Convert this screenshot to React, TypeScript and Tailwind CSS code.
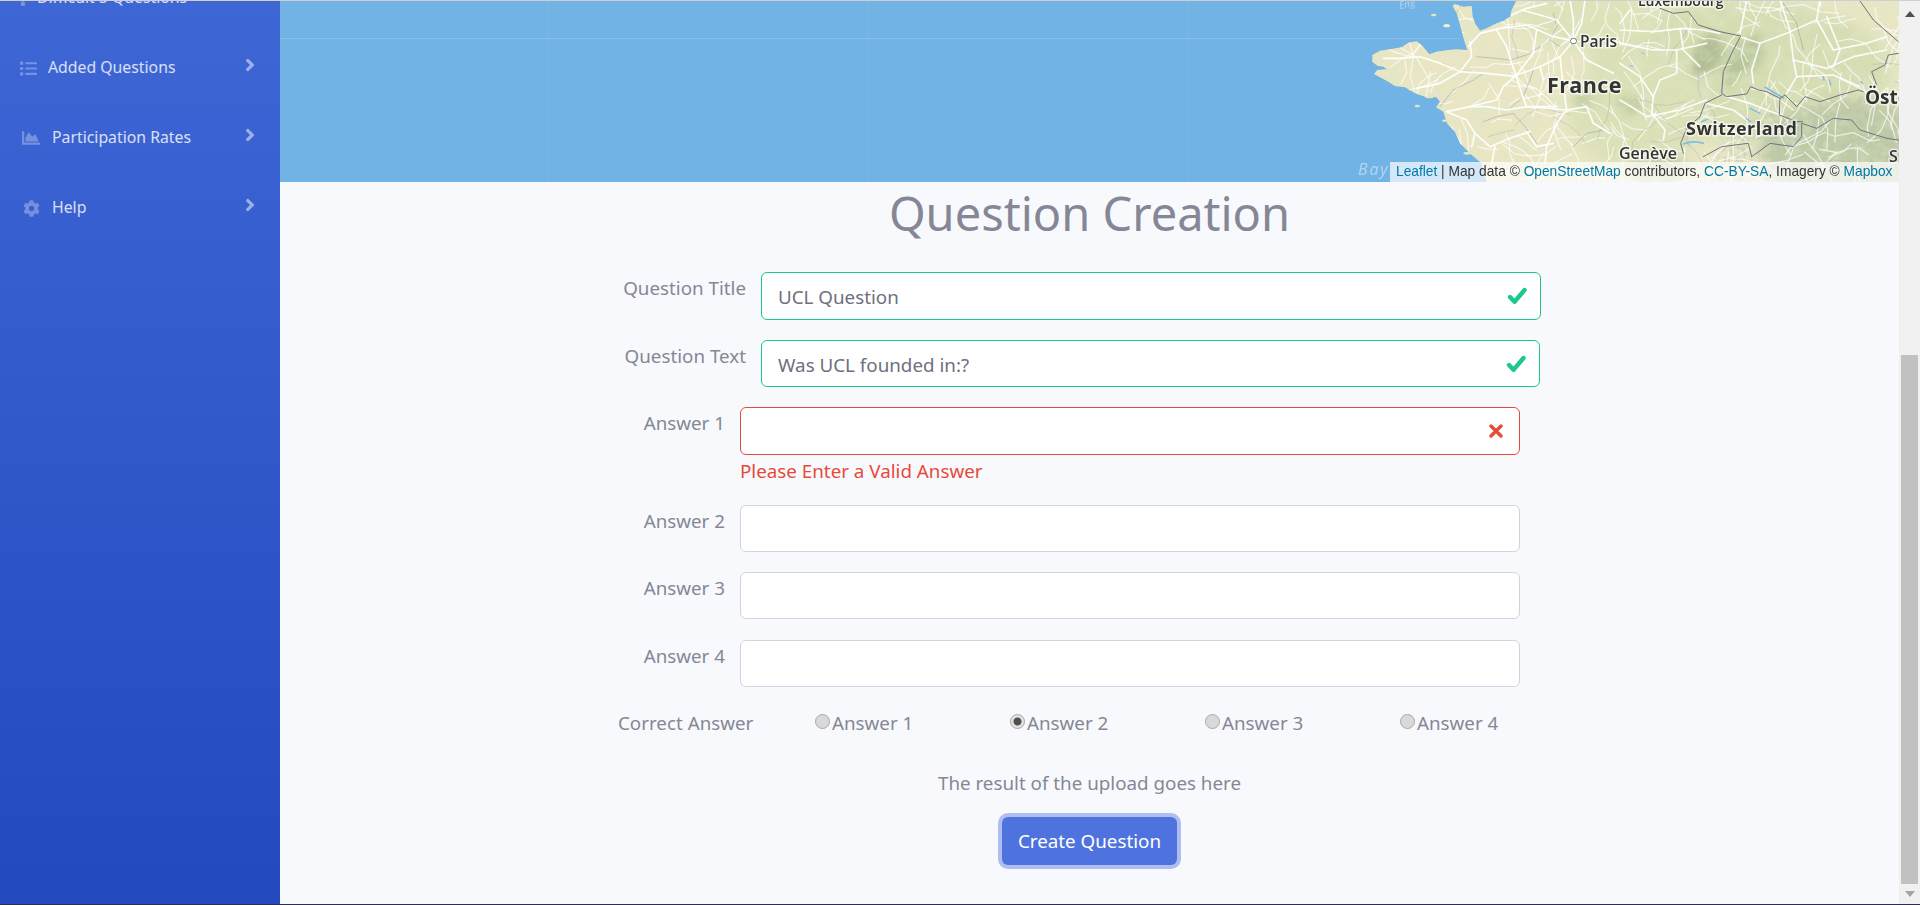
import React from "react";
import { FaExclamation, FaList, FaChartArea, FaCog, FaAngleRight } from "react-icons/fa";

const font = "font-['Noto_Sans',sans-serif]";

function NavItem({ icon, label, iconBox, textCls }: { icon: React.ReactNode; label: string; iconBox: string; textCls: string }) {
  return (
    <div className="flex items-center h-[70px] pr-[20px]">
      <span className={`flex shrink-0 items-center justify-center text-white/30 ${iconBox}`}>{icon}</span>
      <span className={`text-[15.8px] text-white/80 ${textCls}`}>{label}</span>
      <FaAngleRight className="ml-auto -mt-[6px] text-white/50" size={20} />
    </div>
  );
}

function Sidebar() {
  return (
    <aside className="w-[280px] shrink-0 overflow-hidden bg-gradient-to-b from-[#3f66d5] to-[#224abe]">
      <div className="-mt-[38px]">
        <NavItem icon={<FaExclamation size={15} />} iconBox="ml-[16px] w-[14px]" textCls="ml-[7px]" label="Difficult 5 Questions" />
        <NavItem icon={<FaList size={17} />} iconBox="ml-[20px] w-[17px]" textCls="ml-[11px]" label="Added Questions" />
        <NavItem icon={<FaChartArea size={18} />} iconBox="ml-[22px] w-[18px]" textCls="ml-[12px]" label="Participation Rates" />
        <NavItem icon={<FaCog size={17} />} iconBox="ml-[22px] w-[18px]" textCls="ml-[12px]" label="Help" />
      </div>
    </aside>
  );
}

const land =
  "M530,0 L515,30 L510,50 L490,62 L465,72 L440,85 L420,92 L405,70 L398,50 L395,18 L370,20 L345,12 L338,18 L350,40 L362,80 L372,120 L382,150 L350,148 L325,150 L290,155 L268,163 L245,135 L230,124 L205,128 L185,142 L150,148 L120,152 L97,165 L97,185 L112,197 L130,200 L140,208 L112,210 L102,222 L120,232 L145,245 L165,258 L195,262 L225,280 L255,290 L290,292 L300,305 L288,322 L310,335 L322,372 L345,395 L360,430 L395,465 L425,490 L440,546 L1800,546 L1800,0 Z";

const roadsW = [
  "M700,122 L660,170 L600,200 L530,225 L490,260 L470,300 L390,320 L320,335",
  "M700,122 L640,110 L560,75 L480,85 L420,100 L385,140",
  "M470,90 L500,140 L515,190 L530,230 L545,280 L560,320 L650,320",
  "M440,220 L360,215 L300,190",
  "M440,220 L530,230",
  "M360,215 L395,170 L390,125",
  "M320,335 L380,360 L405,400 L450,440 L510,415 L570,395",
  "M560,320 L500,330 L440,320 L390,320",
  "M680,330 L650,370 L620,440 L615,490",
  "M560,320 L680,330 L740,320 L760,370 L810,400",
  "M660,170 L670,260 L680,330",
  "M700,122 L740,180 L820,220",
  "M530,225 L580,160 L590,90",
  "M545,30 L600,45 L650,60 L700,122",
  "M690,0 L700,60 L700,122",
  "M735,0 L725,70 L700,122",
  "M515,45 L560,25 L620,10",
  "M610,240 L600,200",
  "M465,440 L455,490",
  "M560,395 L590,440 L640,430",
  "M405,400 L395,440",
  "M300,190 L240,170 L180,175 L130,175",
  "M360,215 L300,250 L230,265",
];
const deptLines = [
  "M410,170 L470,175 L510,180 L560,165 L600,140",
  "M340,270 L400,240 L430,220",
  "M430,365 L470,350 L520,340 L555,380 L590,430",
  "M640,40 L650,80 L630,120 L660,140",
  "M510,325 L550,290 L570,240 L580,210",
  "M700,440 L740,400 L790,390",
  "M300,320 L340,270",
];
const roadsE = [
  "M0,90 L100,95 L190,85 L250,90 L300,100",
  "M0,190 L60,230 L100,290 L95,340 L135,390 L130,420",
  "M0,300 L50,330 L80,350 L180,330 L260,300",
  "M170,150 L170,220 L120,240 L100,290",
  "M0,130 L100,150 L170,150 L260,130",
  "M360,110 L420,130 L500,100 L590,60 L640,150 L740,130 L800,110",
  "M420,130 L395,210 L400,250",
  "M520,180 L530,230 L500,280",
  "M520,180 L620,205 L700,170 L800,150",
  "M530,230 L640,225 L720,260",
  "M380,0 L360,100",
  "M590,60 L600,0",
  "M620,50 L660,150 L640,200",
  "M320,290 L390,310 L440,330 L480,345",
  "M260,310 L340,330 L380,360",
  "M180,85 L190,150 L240,200",
  "M30,30 L0,70",
  "M480,0 L510,90 L520,180",
];

function minorRoads(seed: number, count: number) {
  let s = seed;
  const rnd = () => {
    s = (s * 1664525 + 1013904223) >>> 0;
    return s / 4294967296;
  };
  const out: string[] = [];
  for (let i = 0; i < count; i++) {
    let x = 1370 + rnd() * 530;
    let y = rnd() * 182;
    let a = rnd() * Math.PI * 2;
    let d = `M${x.toFixed(1)},${y.toFixed(1)}`;
    const n = 2 + Math.floor(rnd() * 3);
    for (let k = 0; k < n; k++) {
      a += (rnd() - 0.5) * 1.3;
      const l = 7 + rnd() * 13;
      x += Math.cos(a) * l;
      y += Math.sin(a) * l;
      d += ` L${x.toFixed(1)},${y.toFixed(1)}`;
    }
    out.push(d);
  }
  return out;
}
const minorW = minorRoads(17, 210);
const minorG = minorRoads(93, 22);

function MapView() {
  return (
    <div className="relative h-[181px] shrink-0 overflow-hidden bg-[#72b3e5]">
      <svg className="block h-full w-full" viewBox="280 1 1619 181" preserveAspectRatio="none">
        <defs>
          <clipPath id="landClip">
            <path d={land} transform="translate(1340 0) scale(.33333)" />
          </clipPath>
          <clipPath id="alpsClip">
            <path d="M1720,135 L1770,112 L1810,105 L1900,90 L1900,182 L1710,182 Z" />
          </clipPath>
          <filter id="mott" x="0" y="0" width="100%" height="100%">
            <feTurbulence type="fractalNoise" baseFrequency="0.07" numOctaves="3" seed="11" />
            <feColorMatrix values="0 0 0 0 .72  0 0 0 0 .8  0 0 0 0 .58  2.4 0 0 0 -1" />
          </filter>
          <filter id="alps" x="0" y="0" width="100%" height="100%">
            <feTurbulence type="fractalNoise" baseFrequency="0.17" numOctaves="3" seed="4" />
            <feColorMatrix values="0 0 0 0 .47  0 0 0 0 .54  0 0 0 0 .44  3 0 0 0 -1.3" />
          </filter>
          <filter id="soft" x="-30%" y="-30%" width="160%" height="160%">
            <feGaussianBlur stdDeviation="7" />
          </filter>
          <filter id="soft2" x="-30%" y="-30%" width="160%" height="160%">
            <feGaussianBlur stdDeviation="4" />
          </filter>
          <filter id="r1" x="-5%" y="-5%" width="110%" height="110%">
            <feGaussianBlur stdDeviation=".5" />
          </filter>
        </defs>

        <g stroke="#ffffff" strokeWidth="1">
          <path d="M280,38.5 H1460" strokeOpacity=".15" />
          <path d="M547.5,0 V182 M867.5,0 V182 M1187.5,0 V182" strokeOpacity=".06" />
        </g>

        <g clipPath="url(#landClip)">
          <rect x="1340" y="0" width="570" height="182" fill="#eae6c4" />
          <g filter="url(#soft)">
            <ellipse cx="1740" cy="70" rx="150" ry="70" fill="#d6ddb2" />
            <ellipse cx="1640" cy="110" rx="70" ry="60" fill="#dce0b6" />
            <ellipse cx="1590" cy="20" rx="70" ry="30" fill="#dfe2b9" />
            <ellipse cx="1850" cy="150" rx="90" ry="50" fill="#bfcba4" />
          </g>
          <g filter="url(#soft2)">
            <ellipse cx="1708" cy="55" rx="14" ry="24" fill="#b2bf95" transform="rotate(30 1708 55)" />
            <ellipse cx="1738" cy="62" rx="9" ry="26" fill="#b6c499" transform="rotate(25 1738 62)" />
            <ellipse cx="1752" cy="55" rx="10" ry="22" fill="#bac79c" transform="rotate(20 1752 55)" />
            <ellipse cx="1630" cy="105" rx="14" ry="10" fill="#c4cfa3" />
            <ellipse cx="1585" cy="100" rx="12" ry="8" fill="#c5d0a5" />
            <ellipse cx="1660" cy="170" rx="30" ry="14" fill="#c1cca1" />
          </g>
          <rect x="1340" y="0" width="570" height="182" filter="url(#mott)" opacity=".55" />
          <g clipPath="url(#alpsClip)">
            <rect x="1690" y="80" width="215" height="102" filter="url(#alps)" opacity=".55" />
          </g>

          <g filter="url(#r1)" fill="none" strokeLinejoin="round" strokeLinecap="round">
            <g stroke="#ffffff" strokeOpacity=".72" strokeWidth="1.1">
              {minorW.map((d) => <path key={d} d={d} />)}
            </g>
            <g stroke="#97a0ab" strokeOpacity=".45" strokeWidth=".8" strokeDasharray="3 1">
              {minorG.map((d) => <path key={d} d={d} />)}
            </g>
            <g transform="translate(1340 0) scale(.33333)">
              <g stroke="#97a0ab" strokeOpacity=".7" strokeWidth="2.5" strokeDasharray="9 3">
                {deptLines.map((d) => <path key={d} d={d} />)}
              </g>
              <g stroke="#ffffff" strokeOpacity=".95" strokeWidth="5">
                {roadsW.map((d) => <path key={d} d={d} />)}
              </g>
            </g>
            <g transform="translate(1620 0) scale(.33333)">
              <g stroke="#ffffff" strokeOpacity=".9" strokeWidth="5">
                {roadsE.map((d) => <path key={d} d={d} />)}
              </g>
              <g stroke="#7fbbe8" strokeWidth="5">
                <path d="M190,432 Q220,420 250,430" />
                <path d="M435,262 L490,294" />
                <path d="M245,365 L262,358" strokeWidth="4" />
                <path d="M390,325 L420,340" strokeWidth="4" />
                <path d="M378,355 L392,365" strokeWidth="4" />
                <path d="M610,230 L612,240 M628,240 L632,255 M722,245 L728,250" strokeWidth="4" />
                <path d="M65,158 L72,162 M30,197 L40,199" strokeWidth="3" />
              </g>
              <g stroke="#6f7380" strokeWidth="3">
                <path d="M120,25 L160,40 L205,35 L235,75 L300,95 L362,108 L335,160 L310,215 L305,280 L320,290 L380,282 L392,260 L415,270 L440,275 L480,295 L495,285 L530,320 L555,290 L600,305 L660,285 L715,270 L730,275" />
                <path d="M305,285 L255,310 L240,350 L200,385 L182,430 L190,460" />
                <path d="M720,3 L760,60 L835,125" />
                <path d="M835,160 L805,165 L795,195 L755,215 L770,255" />
                <path d="M250,470 L305,440 L385,430 L395,470 M395,470 L450,430 L520,440 L545,410 L545,370 L590,385 L640,355 L695,360 L720,390 L800,415 L835,420" />
                <path d="M480,295 L478,345 L530,365 L548,365" />
                <path d="M490,10 L530,70 L550,150" strokeWidth="2" strokeOpacity=".5" />
              </g>
            </g>
          </g>
        </g>

        <g transform="translate(1340 0) scale(.33333)" fill="#e8e4bf">
          <ellipse cx="281" cy="45" rx="8" ry="4" />
          <ellipse cx="320" cy="77" rx="10" ry="5" fill="#f2efd4" />
          <ellipse cx="232" cy="318" rx="8" ry="4" />
          <ellipse cx="315" cy="362" rx="9" ry="3.5" />
          <ellipse cx="382" cy="460" rx="12" ry="4" />
          <ellipse cx="268" cy="292" rx="12" ry="3" />
        </g>

        <g fontFamily="'Open Sans',sans-serif" fill="#333333" stroke="#ffffff" strokeOpacity=".65" strokeWidth="3" paintOrder="stroke">
          <circle cx="1573.5" cy="41" r="2.5" fill="#ffffff" stroke="#444444" strokeOpacity="1" strokeWidth="1.2" />
          <text x="1580" y="47" fontSize="15.5" fontWeight="600">Paris</text>
          <text x="1547" y="93" fontSize="21.5" fontWeight="700" letterSpacing=".4">France</text>
          <text x="1686" y="135" fontSize="18" fontWeight="700" letterSpacing=".5">Switzerland</text>
          <text x="1619" y="159" fontSize="16" fontWeight="600">Genève</text>
          <text x="1638" y="6" fontSize="14" fontWeight="600">Luxembourg</text>
          <text x="1865" y="104" fontSize="19" fontWeight="700">Österreich</text>
          <text x="1889" y="162" fontSize="16" fontWeight="600">S</text>
        </g>
        <g fontFamily="'Open Sans',sans-serif" fontStyle="italic" fill="#ffffff" fillOpacity=".45">
          <text x="1358" y="175" fontSize="16" letterSpacing="1.8">Bay</text>
          <text x="1400" y="9" fontSize="10" transform="rotate(-12 1400 9)">Eng</text>
        </g>
      </svg>
      <div className="absolute bottom-0 right-0 flex h-[20px] w-[509px] items-center whitespace-nowrap bg-white/70 pl-[6px] font-['Liberation_Sans',sans-serif] text-[13.75px] text-[#333]">
        <span className="text-[#0078a8]">Leaflet</span>
        <span className="whitespace-pre"> | Map data © </span>
        <span className="text-[#0078a8]">OpenStreetMap</span>
        <span className="whitespace-pre"> contributors, </span>
        <span className="text-[#0078a8]">CC-BY-SA</span>
        <span className="whitespace-pre">, Imagery © </span>
        <span className="text-[#0078a8]">Mapbox</span>
      </div>
    </div>
  );
}

function Check() {
  return (
    <svg className="absolute right-[14px] top-[15px]" width="20" height="18" viewBox="0 0 20 18" fill="none" stroke="#1cc88a" strokeWidth="4.4" strokeLinecap="round" strokeLinejoin="round">
      <path d="M3,10 L7.5,14.8 L17.5,3" />
    </svg>
  );
}
function Cross() {
  return (
    <svg className="absolute right-[17px] top-[17px]" width="14" height="14" viewBox="0 0 14 14" fill="none" stroke="#e74a3b" strokeWidth="3.4" strokeLinecap="round">
      <path d="M2,2 L12,12 M12,2 L2,12" />
    </svg>
  );
}

function Field({
  label, value, state, rowCls, labelW, inputW, h, gap,
}: { label: string; value?: string; state?: "ok" | "bad"; rowCls: string; labelW: string; inputW: string; h: string; gap: string }) {
  const border = state === "ok" ? "border-[#1cc88a]" : state === "bad" ? "border-[#e74a3b]" : "border-[#d1d3e2]";
  return (
    <div className={`flex ${rowCls}`}>
      <label className={`shrink-0 text-right text-[#858796] leading-[32px] text-[18.8px] whitespace-nowrap ${labelW}`}>{label}</label>
      <div className={`relative shrink-0 ${gap} ${inputW} ${h}`}>
        <input
          readOnly
          value={value ?? ""}
          className={`block h-full w-full rounded-[6px] border bg-white px-[16px] pt-[2px] text-[18.8px] text-[#6e707e] outline-none ${border}`}
        />
        {state === "ok" && <Check />}
        {state === "bad" && <Cross />}
      </div>
    </div>
  );
}

function Radio({ label, checked, w }: { label: string; checked?: boolean; w: string }) {
  return (
    <label className={`flex items-center text-[18.8px] text-[#858796] ${w}`}>
      <input
        type="radio"
        readOnly
        checked={!!checked}
        className="mr-[2px] -mt-[3px] h-[15px] w-[15px] shrink-0 appearance-none rounded-full border border-[#a9a9a9] bg-[#d9d9d9] checked:bg-[radial-gradient(circle,#4f4f4f_0,#4f4f4f_3.5px,#e2e2e2_4.5px)]"
      />
      <span>{label}</span>
    </label>
  );
}

function Form() {
  return (
    <div className="flex-1 bg-[#f8f9fc]">
      <h1 className="mb-[28px] text-center text-[47px] font-normal leading-[62px] text-[#858796]">Question Creation</h1>
      <Field label="Question Title" value="UCL Question" state="ok" rowCls="ml-[334px]" labelW="w-[132px]" inputW="w-[780px]" h="h-[48px]" gap="ml-[15px]" />
      <Field label="Question Text" value="Was UCL founded in:?" state="ok" rowCls="ml-[334px] mt-[20px]" labelW="w-[132px]" inputW="w-[779px]" h="h-[47px]" gap="ml-[15px]" />
      <Field label="Answer 1" state="bad" rowCls="ml-[334px] mt-[20px]" labelW="w-[111px]" inputW="w-[780px]" h="h-[48px]" gap="ml-[15px]" />
      <div className="ml-[460px] h-[32px] text-[18.8px] leading-[32px] text-[#e74a3b]">Please Enter a Valid Answer</div>
      <Field label="Answer 2" rowCls="ml-[334px] mt-[18px]" labelW="w-[111px]" inputW="w-[780px]" h="h-[47px]" gap="ml-[15px]" />
      <Field label="Answer 3" rowCls="ml-[334px] mt-[20px]" labelW="w-[111px]" inputW="w-[780px]" h="h-[47px]" gap="ml-[15px]" />
      <Field label="Answer 4" rowCls="ml-[334px] mt-[21px]" labelW="w-[111px]" inputW="w-[780px]" h="h-[47px]" gap="ml-[15px]" />
      <div className="ml-[338px] mt-[24px] flex h-[24px] items-center">
        <span className="w-[197px] whitespace-nowrap text-[18.8px] text-[#858796]">Correct Answer</span>
        <Radio label="Answer 1" w="w-[195px]" />
        <Radio label="Answer 2" checked w="w-[195px]" />
        <Radio label="Answer 3" w="w-[195px]" />
        <Radio label="Answer 4" w="w-[120px]" />
      </div>
      <p className="mt-[36px] h-[24px] text-center text-[18.8px] leading-[24px] text-[#858796]">The result of the upload goes here</p>
      <div className="mt-[22px] flex justify-center">
        <button className="h-[48px] w-[175px] rounded-[6px] bg-[#4e73df] text-[18.8px] text-white shadow-[0_0_0_4px_#b0bdf0]">Create Question</button>
      </div>
    </div>
  );
}

function Scrollbar() {
  return (
    <div className="flex w-[21px] shrink-0 flex-col items-center bg-[#f1f1f1]">
      <svg className="mt-[10px]" width="10" height="6" viewBox="0 0 10 6"><path d="M5,0 L10,6 L0,6 Z" fill="#505050" /></svg>
      <div className="mt-[338px] h-[529px] w-[17px] bg-[#c1c1c1]" />
      <svg className="mt-[7px]" width="10" height="6" viewBox="0 0 10 6"><path d="M0,0 L10,0 L5,6 Z" fill="#a3a3a3" /></svg>
    </div>
  );
}

export default function App() {
  return (
    <div className={`flex h-[905px] w-full flex-col overflow-hidden ${font}`}>
      <div className="h-px shrink-0 bg-[#cfcfcf]" />
      <div className="flex min-h-0 flex-1">
        <Sidebar />
        <main className="flex min-w-0 flex-1 flex-col">
          <MapView />
          <Form />
        </main>
        <Scrollbar />
      </div>
      <div className="h-px shrink-0 bg-[#2f2c4f]" />
    </div>
  );
}
